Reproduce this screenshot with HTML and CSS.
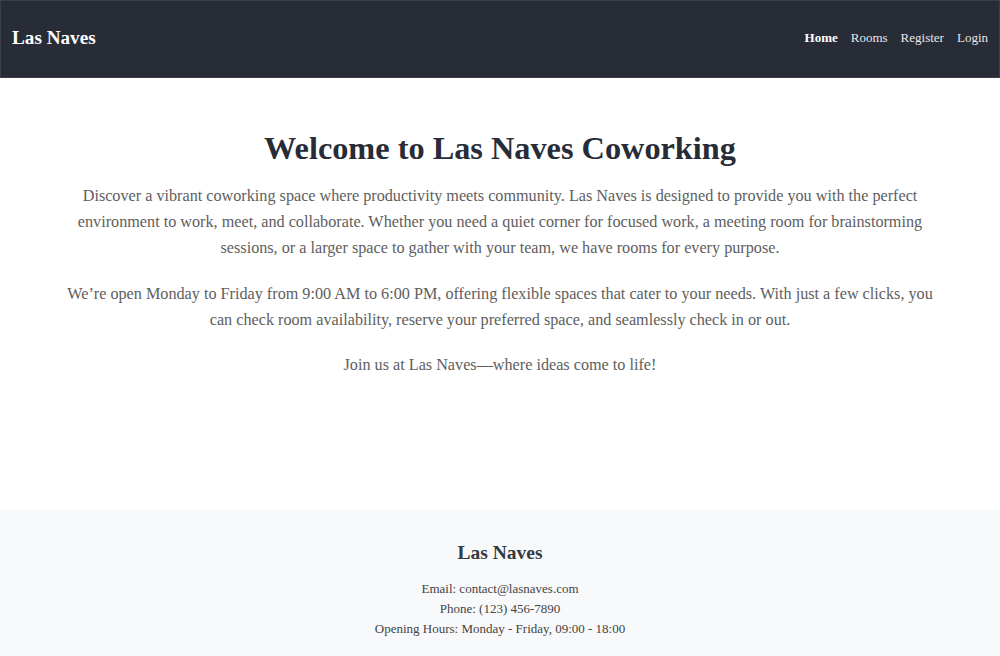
FILE: index.html
```html
<!DOCTYPE html>
<html lang="en">
<head>
<meta charset="utf-8">
<title>Las Naves</title>
<link rel="stylesheet" href="styles.css">
</head>
<body>
<header class="site-header">
  <a class="brand" href="#">Las Naves</a>
  <nav class="nav">
    <a class="nav-link active" href="#">Home</a>
    <a class="nav-link" href="#">Rooms</a>
    <a class="nav-link" href="#">Register</a>
    <a class="nav-link" href="#">Login</a>
  </nav>
</header>
<main class="main">
  <section class="intro">
    <h1 class="intro-title">Welcome to Las Naves Coworking</h1>
    <p class="intro-text">Discover a vibrant coworking space where productivity meets community. Las Naves is designed to provide you with the perfect environment to work, meet, and collaborate. Whether you need a quiet corner for focused work, a meeting room for brainstorming sessions, or a larger space to gather with your team, we have rooms for every purpose.</p>
    <p class="intro-text">We’re open Monday to Friday from 9:00 AM to 6:00 PM, offering flexible spaces that cater to your needs. With just a few clicks, you can check room availability, reserve your preferred space, and seamlessly check in or out.</p>
    <p class="intro-text">Join us at Las Naves—where ideas come to life!</p>
  </section>
</main>
<footer class="site-footer">
  <h2 class="footer-title">Las Naves</h2>
  <p class="footer-line">Email: contact@lasnaves.com</p>
  <p class="footer-line">Phone: (123) 456-7890</p>
  <p class="footer-line">Opening Hours: Monday - Friday, 09:00 - 18:00</p>
</footer>
</body>
</html>
```

FILE: styles.css
```css
* { box-sizing: border-box; }
html, body { margin: 0; padding: 0; }
body {
  font-family: "Liberation Serif", "Times New Roman", serif;
  background: #ffffff;
  color: #282c36;
}
.site-header {
  height: 78px;
  background: #282c36;
  border: 1px solid #3a3f4a;
  display: flex;
  align-items: center;
  justify-content: space-between;
  padding: 0 11px 3px;
}
.brand {
  color: #ffffff;
  font-weight: bold;
  font-size: 19.2px;
  text-decoration: none;
}
.nav { display: flex; gap: 13px; }
.nav-link {
  color: #e6e7ea;
  font-size: 13px;
  text-decoration: none;
}
.nav-link.active { color: #ffffff; font-weight: bold; }
.main {
  height: 432px;
  padding-top: 52px;
}
.intro {
  max-width: 880px;
  margin: 0 auto;
  text-align: center;
}
.intro-title {
  font-size: 32.3px;
  margin: 0 0 16px;
  color: #282c36;
  line-height: 37px;
}
.intro-text {
  font-size: 16.2px;
  line-height: 26px;
  color: #5e5e5e;
  margin: 0 0 19.5px;
}
.site-footer {
  background: #f8f9fa;
  text-align: center;
  padding: 32px 0 20px;
}
.footer-title {
  font-size: 19.5px;
  margin: 0 0 15px;
  line-height: 22px;
  color: #333a40;
}
.footer-line {
  font-size: 13px;
  line-height: 20px;
  margin: 0;
  color: #444444;
}
```
